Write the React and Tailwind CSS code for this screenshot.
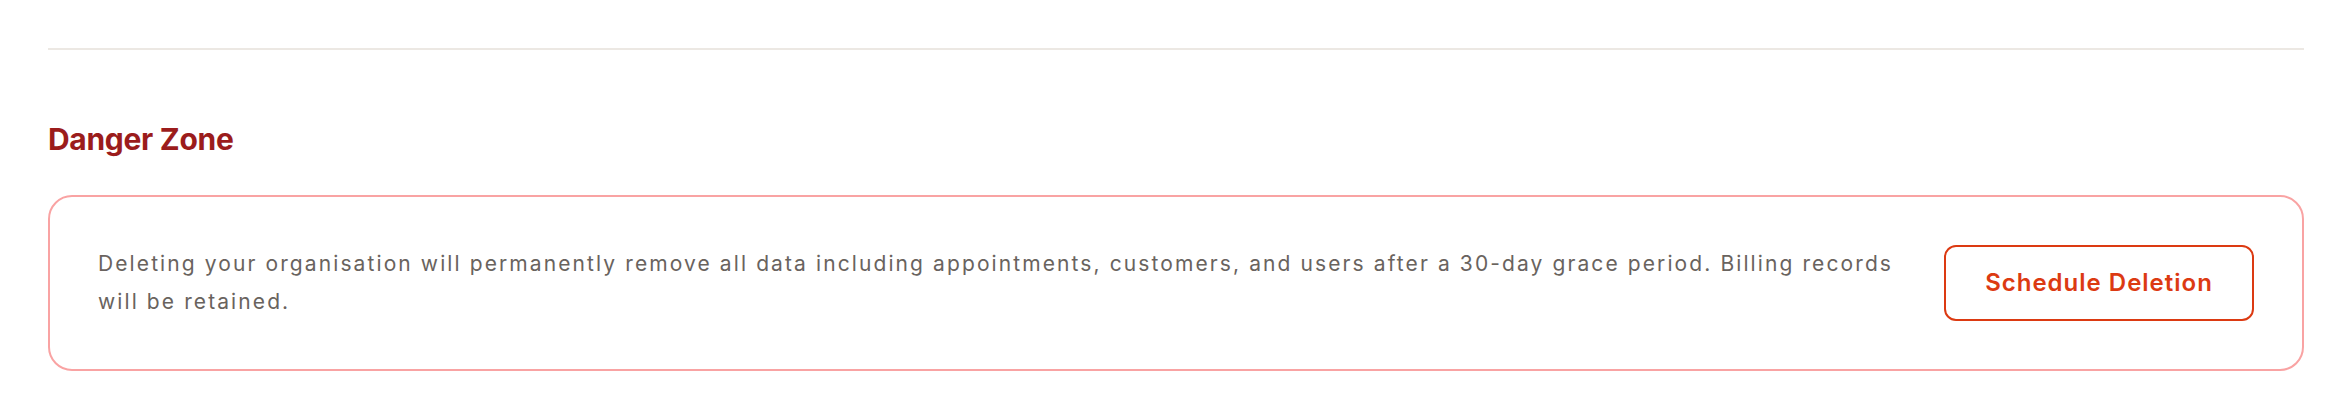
export default function App() {
  return (
    <div className="w-[2352px] h-[420px] bg-white px-[48px] pt-[48px]" style={{ fontFamily: 'Inter, "Noto Sans", sans-serif' }}>
      <div className="h-[1.5px] bg-[#ece8e3]" />
      <h2 className="mt-[71px] text-[30px] leading-[36px] font-bold tracking-[-0.3px] text-[#9b1c1c]">Danger Zone</h2>
      <div className="mt-[38px] flex items-center gap-[48px] rounded-[24px] border-2 border-[#f9a3a3] px-[48px] py-[48px]">
        <p className="flex-1 text-[21px] leading-[38px] tracking-[2.1px] text-[#69635e]">
          Deleting your organisation will permanently remove all data including appointments, customers, and users after a 30-day grace period. Billing records will be retained.
        </p>
        <button className="shrink-0 w-[310px] h-[76px] rounded-[12px] border-2 border-[#dc3a12] text-[24px] font-semibold tracking-[1px] text-[#dc3a12] bg-white">
          Schedule Deletion
        </button>
      </div>
    </div>
  );
}
